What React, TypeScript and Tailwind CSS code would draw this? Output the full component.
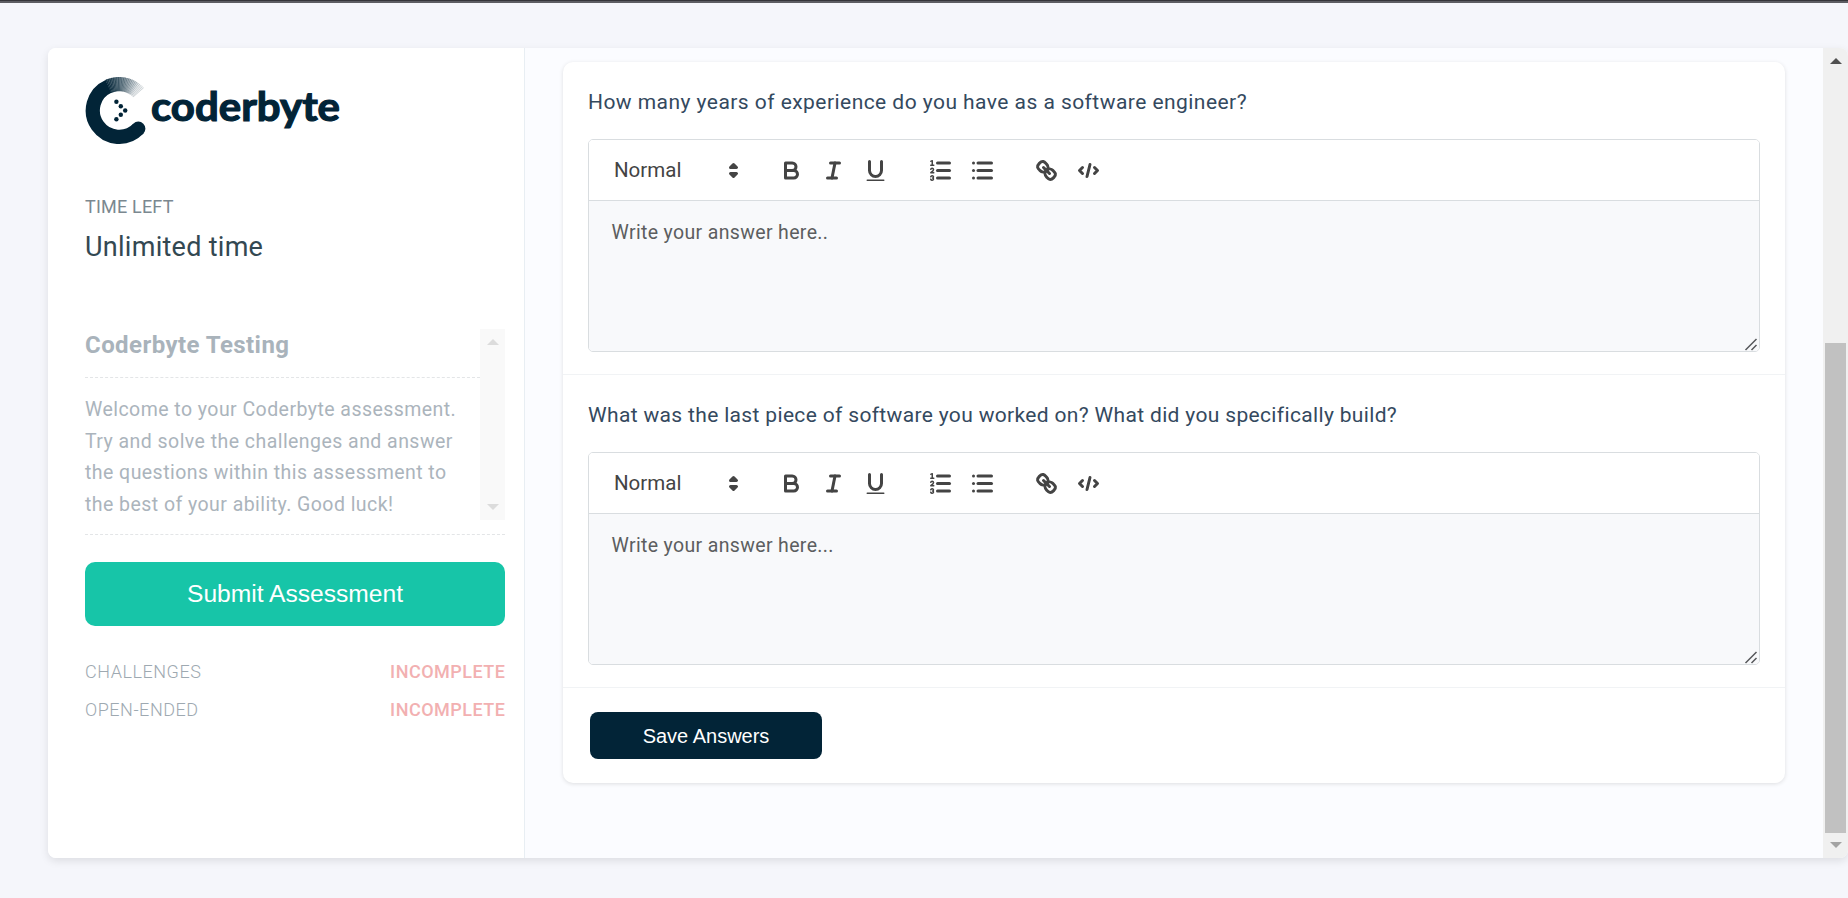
import React from "react";

const stroke = { fill: "none", stroke: "#444", strokeWidth: 2, strokeLinecap: "round", strokeLinejoin: "round" } as const;
const thin = { ...stroke, strokeWidth: 1 } as const;

function ToolButton({ label, children }: { label: string; children: React.ReactNode }) {
  return (
    <button aria-label={label} className="h-[36px] w-[42px] px-[7.5px] py-[4.5px]">
      <svg viewBox="0 0 18 18" className="size-[27px]">{children}</svg>
    </button>
  );
}

function Toolbar() {
  return (
    <div className="flex h-[61px] gap-[22.5px] border-b border-[#d9dde0] bg-white p-[12px]">
      <div className="flex h-[36px] w-[147px] items-center justify-between pr-px pl-[13px]">
        <span className="font-['Roboto',sans-serif] text-[20.5px] text-[#444]">Normal</span>
        <svg viewBox="0 0 18 18" className="size-[27px]">
          <polygon {...stroke} points="7 11 9 13 11 11 7 11" />
          <polygon {...stroke} points="7 7 9 5 11 7 7 7" />
        </svg>
      </div>
      <div className="flex">
        <ToolButton label="Bold">
          <path {...stroke} d="M5,4H9.5A2.5,2.5,0,0,1,12,6.5v0A2.5,2.5,0,0,1,9.5,9H5V4Z" />
          <path {...stroke} d="M5,9h5.5A2.5,2.5,0,0,1,13,11.5v0A2.5,2.5,0,0,1,10.5,14H5V9Z" />
        </ToolButton>
        <ToolButton label="Italic">
          <line {...stroke} x1="7" x2="13" y1="4" y2="4" />
          <line {...stroke} x1="5" x2="11" y1="14" y2="14" />
          <line {...stroke} x1="8" x2="10" y1="14" y2="4" />
        </ToolButton>
        <ToolButton label="Underline">
          <path {...stroke} d="M5,3V9a4.012,4.012,0,0,0,4,4H9a4.012,4.012,0,0,0,4-4V3" />
          <rect fill="#444" height="1" rx="0.5" width="12" x="3" y="15" />
        </ToolButton>
      </div>
      <div className="flex">
        <ToolButton label="Ordered list">
          <line {...stroke} x1="7" x2="15" y1="4" y2="4" />
          <line {...stroke} x1="7" x2="15" y1="9" y2="9" />
          <line {...stroke} x1="7" x2="15" y1="14" y2="14" />
          <line {...thin} x1="2.5" x2="4.5" y1="5.5" y2="5.5" />
          <path fill="#444" d="M3.5,6A0.5,0.5,0,0,1,3,5.5V3.085l-0.276.138A0.5,0.5,0,0,1,2.053,3c-0.124-.247-0.023-0.324.224-0.447l1-.5A0.5,0.5,0,0,1,4,2.5v3A0.5,0.5,0,0,1,3.5,6Z" />
          <path {...thin} d="M4.5,10.5h-2c0-.234,1.85-1.076,1.85-2.234A0.959,0.959,0,0,0,2.5,8.156" />
          <path {...thin} d="M2.5,14.846a0.959,0.959,0,0,0,1.85-.109A0.7,0.7,0,0,0,3.75,14a0.688,0.688,0,0,0,.6-0.736,0.959,0.959,0,0,0-1.85-.109" />
        </ToolButton>
        <ToolButton label="Bullet list">
          <line {...stroke} x1="6" x2="15" y1="4" y2="4" />
          <line {...stroke} x1="6" x2="15" y1="9" y2="9" />
          <line {...stroke} x1="6" x2="15" y1="14" y2="14" />
          <line {...stroke} x1="3" x2="3" y1="4" y2="4" />
          <line {...stroke} x1="3" x2="3" y1="9" y2="9" />
          <line {...stroke} x1="3" x2="3" y1="14" y2="14" />
        </ToolButton>
      </div>
      <div className="flex">
        <ToolButton label="Link">
          <line {...stroke} x1="7" x2="11" y1="7" y2="11" />
          <path {...stroke} d="M8.9,4.577a3.476,3.476,0,0,1,.36,4.679A3.476,3.476,0,0,1,4.577,8.9C3.185,7.5,2.035,6.4,4.217,4.217S7.5,3.185,8.9,4.577Z" />
          <path {...stroke} d="M13.423,9.1a3.476,3.476,0,0,0-4.679-.36,3.476,3.476,0,0,0,.36,4.679c1.392,1.392,2.5,2.542,4.679.36S14.815,10.5,13.423,9.1Z" />
        </ToolButton>
        <ToolButton label="Code">
          <polyline {...stroke} points="5 7 3 9 5 11" />
          <polyline {...stroke} points="13 7 15 9 13 11" />
          <line {...stroke} x1="10" x2="8" y1="5" y2="13" />
        </ToolButton>
      </div>
    </div>
  );
}

function Question({ title, placeholder, titleClass }: { title: string; placeholder: string; titleClass: string }) {
  return (
    <section className="border-b border-[#f1f3f5] px-[25px] pb-[22px]">
      <h2 className={`flex h-[77px] items-center pt-[5px] font-['Roboto',sans-serif] text-[21px] text-[#34495e] ${titleClass}`}>
        {title}
      </h2>
      <div className="flex h-[213px] flex-col overflow-hidden rounded-[5px] border border-[#d9dde0]">
        <Toolbar />
        <div className="relative flex-1 bg-[#f8f9fb] px-[22.5px] pt-[18px] font-['Roboto',sans-serif] text-[19.5px] leading-[28px] tracking-[0.35px] text-[#5c5e60]">
          {placeholder}
          <svg viewBox="0 0 14 14" className="absolute right-[1px] bottom-[0px] size-[14px]" fill="none" stroke="#55575a" strokeWidth="1.5">
            <path d="M1.5 13 12.5 2M7.5 13 12.5 8" />
          </svg>
        </div>
      </div>
    </section>
  );
}

const CX = 34.2;
const CY = 34.5;

function polar(r: number, deg: number) {
  const a = (deg * Math.PI) / 180;
  return `${(CX + r * Math.cos(a)).toFixed(2)} ${(CY + r * Math.sin(a)).toFixed(2)}`;
}

function Logo() {
  const rays = Array.from({ length: 24 }, (_, i) => i);
  return (
    <svg width="260" height="70" viewBox="0 0 260 70" aria-label="coderbyte" className="block">
      <path d={`M${polar(26.4, 43.6)}A26.4 26.4 0 1 1 ${polar(26.4, -114)}`} fill="none" stroke="#022437" strokeWidth="14.2" />
      <circle cx="53.3" cy="52.7" r="7.1" fill="#022437" />
      {rays.map((i) => {
        const start = -114.5 + i * 3;
        return (
          <g key={i} stroke="#022437" fill="none">
            <path d={`M${polar(26.4, start)}A26.4 26.4 0 0 1 ${polar(26.4, start + 3.1)}`} strokeWidth="14.2" opacity={Math.max(0.06, 0.92 - i * 0.042)} />
            <path d={`M${polar(19.3, start + 1)}L${polar(33.5, start + 2.5)}`} strokeWidth="0.7" opacity={Math.max(0.18, 0.7 - i * 0.022)} />
          </g>
        );
      })}
      <g fill="#022437">
        <circle cx="31.4" cy="25.8" r="2.2" />
        <circle cx="35.8" cy="30.2" r="2.2" />
        <circle cx="40.2" cy="34.5" r="2.2" />
        <circle cx="35.8" cy="38.8" r="2.2" />
        <circle cx="31.4" cy="43.3" r="2.2" />
      </g>
      <text x="66" y="45" textLength="189" lengthAdjust="spacingAndGlyphs" fill="#022437" stroke="#022437" strokeWidth="1.2" className="font-['Lato',sans-serif] text-[40px] font-bold">
        coderbyte
      </text>
    </svg>
  );
}

function Arrow({ down, color }: { down?: boolean; color: string }) {
  return (
    <svg viewBox="0 0 12 6" width="12" height="6" fill={color}>
      <path d={down ? "M0 0H12L6 6Z" : "M0 6H12L6 0Z"} />
    </svg>
  );
}

function StatusRow({ name }: { name: string }) {
  return (
    <div className="flex h-[38px] items-center justify-between text-[18px] leading-[38px]">
      <span className="font-light tracking-[0.53px] text-[#9ea9b1]">{name}</span>
      <span className="-mr-[0.5px] font-medium tracking-[0.5px] text-[#f2b0b1]">INCOMPLETE</span>
    </div>
  );
}

export default function App() {
  return (
    <div className="h-[898px] w-[1848px] overflow-hidden bg-[#f5f6fb]">
      <div className="h-[3px] border-b-2 border-[#5d5d63] bg-[#35353a]" />
      <div className="mt-[45px] ml-[48px] flex h-[810px] w-[1800px] overflow-hidden rounded-[8px] bg-[#fbfcff] shadow-[0_3px_9px_rgba(0,0,0,0.10)]">
        <aside className="w-[477px] border-r border-[#e8eef3] bg-white pl-[37px] pr-[19px] font-['Roboto',sans-serif]">
          <div className="h-[98px] pt-[28px]">
            <Logo />
          </div>
          <div className="mt-[47px] text-[18px] leading-[28px] tracking-[0.2px] text-[#7b8890]">TIME LEFT</div>
          <div className="mt-[8px] text-[27px] leading-[36px] tracking-[0.28px] text-[#334852]">Unlimited time</div>
          <div className="mt-[64px] flex h-[191px]">
            <div className="w-[395px]">
              <h1 className="h-[49px] border-b border-dashed border-[#e3e5e7] text-[24px] leading-[32px] font-bold tracking-[0.43px] text-[#a9b3bb]">
                Coderbyte Testing
              </h1>
              <p className="mt-[16px] text-[19.5px] leading-[31.6px] whitespace-pre tracking-[0.45px] text-[#abb4bc]">
                {"Welcome to your Coderbyte assessment.\nTry and solve the challenges and answer\nthe questions within this assessment to\nthe best of your ability. Good luck!"}
              </p>
            </div>
            <div className="flex w-[25px] flex-col items-center justify-between bg-[#f9f9f9] py-[10px]">
              <Arrow color="#dcdcdc" />
              <Arrow down color="#dcdcdc" />
            </div>
          </div>
          <div className="mt-[14px] border-t border-dashed border-[#e3e5e7]" />
          <button className="mt-[27px] mb-[27px] block h-[64px] w-full rounded-[10px] bg-[#17c5a8] font-['Liberation_Sans',Arial,sans-serif] text-[24.6px] text-white">
            Submit Assessment
          </button>
          <StatusRow name="CHALLENGES" />
          <StatusRow name="OPEN-ENDED" />
        </aside>
        <main className="flex-1 pt-[14px] pl-[38px]">
          <div className="h-[721px] w-[1222px] rounded-[10px] bg-white shadow-[0_1px_4px_rgba(0,0,0,0.12)]">
            <Question title="How many years of experience do you have as a software engineer?" placeholder="Write your answer here.." titleClass="tracking-[0.45px]" />
            <Question title="What was the last piece of software you worked on? What did you specifically build?" placeholder="Write your answer here..." titleClass="tracking-[0.34px]" />
            <button className="mt-[24px] ml-[27px] block h-[47px] w-[232px] rounded-[8px] bg-[#022437] font-['Liberation_Sans',Arial,sans-serif] text-[20px] text-white">
              Save Answers
            </button>
          </div>
        </main>
        <div className="flex w-[25px] flex-col items-center bg-[#f0f0f0] pt-[10px]">
          <Arrow color="#505050" />
          <div className="mt-[279px] mb-[9px] h-[490px] w-[21px] bg-[#c1c1c1]" />
          <Arrow down color="#a3a3a3" />
        </div>
      </div>
    </div>
  );
}
